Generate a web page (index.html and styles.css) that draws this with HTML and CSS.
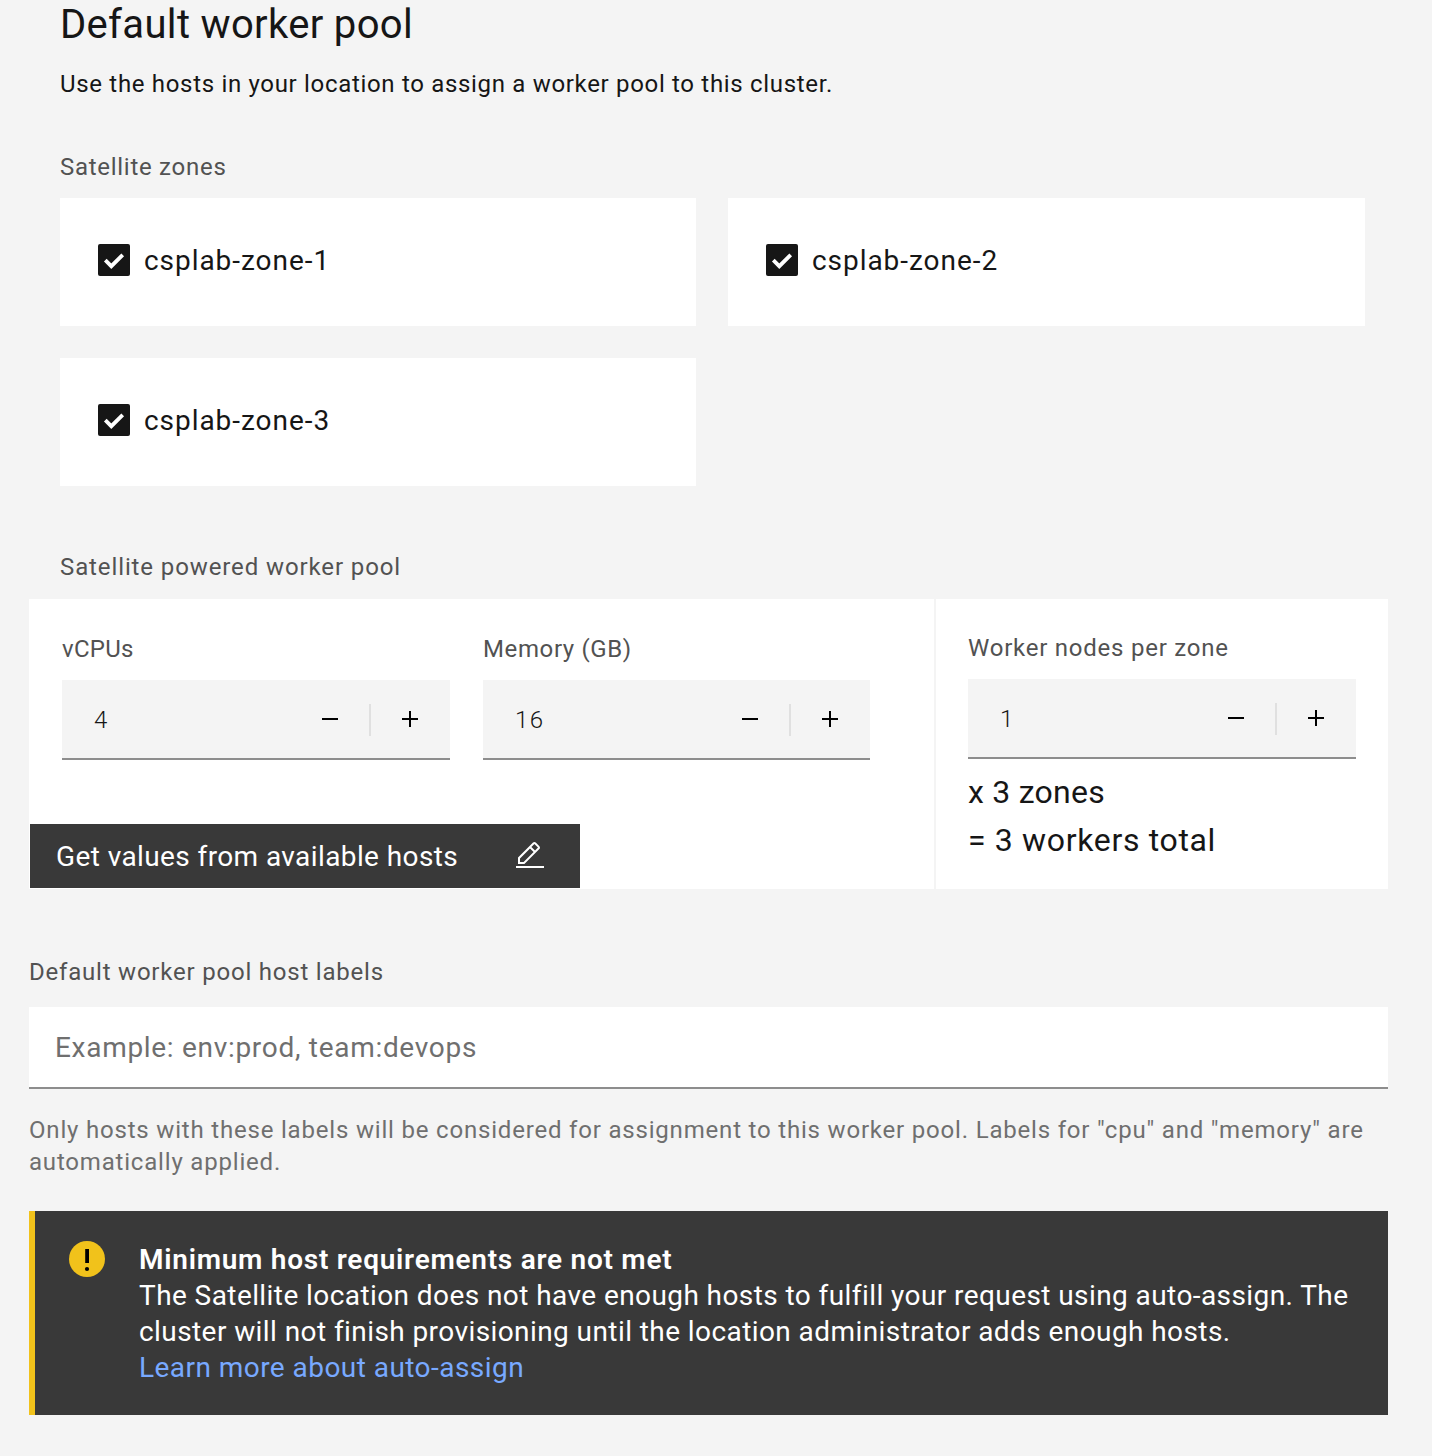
FILE: index.html
```html
<!DOCTYPE html>
<html lang="en">
<head>
<meta charset="utf-8">
<title>Default worker pool</title>
<link rel="stylesheet" href="styles.css">
</head>
<body>
<main class="page">
  <header class="intro">
    <h1 class="title">Default worker pool</h1>
    <p class="lead">Use the hosts in your location to assign a worker pool to this cluster.</p>
  </header>

  <section class="zones">
    <h2 class="label label-zones">Satellite zones</h2>
    <div class="zone-grid">
      <div class="zone">
        <svg class="check" viewBox="0 0 32 32"><rect width="32" height="32" rx="2" fill="#161616"/><path d="M7.3 16.2l6 6L24.7 10.8" fill="none" stroke="#fff" stroke-width="3.8"/></svg>
        <span class="zone-name">csplab-zone-1</span>
      </div>
      <div class="zone">
        <svg class="check" viewBox="0 0 32 32"><rect width="32" height="32" rx="2" fill="#161616"/><path d="M7.3 16.2l6 6L24.7 10.8" fill="none" stroke="#fff" stroke-width="3.8"/></svg>
        <span class="zone-name">csplab-zone-2</span>
      </div>
      <div class="zone">
        <svg class="check" viewBox="0 0 32 32"><rect width="32" height="32" rx="2" fill="#161616"/><path d="M7.3 16.2l6 6L24.7 10.8" fill="none" stroke="#fff" stroke-width="3.8"/></svg>
        <span class="zone-name">csplab-zone-3</span>
      </div>
    </div>
  </section>

  <section class="pool">
    <h2 class="label label-pool">Satellite powered worker pool</h2>
    <div class="panel">
      <div class="panel-main">
        <div class="fields">
          <div class="field field-cpu">
            <div class="label label-cpu">vCPUs</div>
            <div class="stepper">
              <span class="value">4</span>
              <svg class="icon16" viewBox="0 0 16 16"><path d="M0 7h16v2H0z"/></svg>
              <i class="rule"></i>
              <svg class="icon16" viewBox="0 0 16 16"><path d="M9 7V0H7v7H0v2h7v7h2V9h7V7z"/></svg>
            </div>
          </div>
          <div class="field field-memory">
            <div class="label label-memory">Memory (GB)</div>
            <div class="stepper">
              <span class="value value-memory">16</span>
              <svg class="icon16" viewBox="0 0 16 16"><path d="M0 7h16v2H0z"/></svg>
              <i class="rule"></i>
              <svg class="icon16" viewBox="0 0 16 16"><path d="M9 7V0H7v7H0v2h7v7h2V9h7V7z"/></svg>
            </div>
          </div>
        </div>
        <button class="fetch" type="button">
          <span class="fetch-text">Get values from available hosts</span>
          <svg class="icon32" viewBox="0 0 32 32"><path d="M2 26H30V28H2zM25.4 9c.8-.8.8-2 0-2.8l-3.6-3.6c-.8-.8-2-.8-2.8 0l-15 15V24h6.4L25.4 9zM20.4 4L24 7.6l-3 3L17.4 7 20.4 4zM6 22v-3.6l10-10 3.6 3.6-10 10H6z"/></svg>
        </button>
      </div>
      <div class="panel-side">
        <div class="label label-nodes">Worker nodes per zone</div>
        <div class="stepper">
          <span class="value">1</span>
          <svg class="icon16" viewBox="0 0 16 16"><path d="M0 7h16v2H0z"/></svg>
          <i class="rule"></i>
          <svg class="icon16" viewBox="0 0 16 16"><path d="M9 7V0H7v7H0v2h7v7h2V9h7V7z"/></svg>
        </div>
        <div class="totals">
          <div class="total-zones">x 3 zones</div>
          <div class="total-workers">= 3 workers total</div>
        </div>
      </div>
    </div>
  </section>

  <section class="host-labels">
    <label class="label label-hosts" for="hosts">Default worker pool host labels</label>
    <input class="text-input" id="hosts" type="text" placeholder="Example: env:prod, team:devops">
    <p class="help">Only hosts with these labels will be considered for assignment to this worker pool. Labels for "cpu" and "memory" are<br>automatically applied.</p>
  </section>

  <section class="notice">
    <svg class="warning" viewBox="0 0 36 36"><circle cx="18" cy="18" r="18" fill="#f1c21b"/><path d="M16.2 8h3.8v14h-3.8z"/><circle cx="18" cy="28" r="2.1"/></svg>
    <div class="notice-text">
      <strong class="notice-title">Minimum host requirements are not met</strong>
      <p class="notice-body">The Satellite location does not have enough hosts to fulfill your request using auto-assign. The<br>cluster will not finish provisioning until the location administrator adds enough hosts.</p>
      <a class="notice-link" href="#">Learn more about auto-assign</a>
    </div>
  </section>
</main>
</body>
</html>
```
FILE: styles.css
```css
* {
  box-sizing: border-box;
}

body {
  margin: 0;
  background: #f4f4f4;
  color: #161616;
  font-family: Roboto, "Liberation Sans", sans-serif;
}

h1,
h2,
p {
  margin: 0;
  font-weight: 400;
}

svg {
  display: block;
  flex: none;
}

.page {
  width: 1432px;
  height: 1456px;
  padding: 1px 44px 0 29px;
  overflow: hidden;
}

.intro {
  padding-left: 31px;
}

.title {
  font-size: 40px;
  line-height: 48px;
  letter-spacing: 0.33px;
}

.lead {
  margin-top: 19px;
  font-size: 24px;
  line-height: 32px;
  letter-spacing: 0.68px;
}

.label {
  display: block;
  color: #525252;
  font-size: 24px;
  line-height: 32px;
  white-space: nowrap;
}

.zones {
  margin-top: 51px;
  padding: 0 23px 0 31px;
}

.label-zones {
  letter-spacing: 0.72px;
}

.zone-grid {
  display: grid;
  grid-template-columns: 636px 637px;
  grid-auto-rows: 128px;
  gap: 32px;
  margin-top: 15px;
}

.zone {
  display: flex;
  align-items: flex-start;
  gap: 14px;
  padding: 46px 38px;
  background: #fff;
}

.check {
  width: 32px;
  height: 32px;
}

.zone-name {
  font-size: 28px;
  line-height: 34px;
  letter-spacing: 0.95px;
}

.pool {
  margin-top: 65px;
}

.label-pool {
  padding-left: 31px;
  letter-spacing: 0.89px;
}

.panel {
  display: grid;
  grid-template-columns: 905px 452px;
  gap: 2px;
  height: 290px;
  margin-top: 16px;
}

.panel-main,
.panel-side {
  background: #fff;
}

.panel-main {
  display: flex;
  flex-direction: column;
  justify-content: space-between;
  padding: 34px 0 1px 1px;
}

.fields {
  display: flex;
  gap: 33px;
  padding-left: 32px;
}

.field-cpu {
  width: 388px;
}

.field-memory {
  width: 387px;
}

.label-cpu {
  letter-spacing: 0.263px;
}

.label-memory {
  letter-spacing: 0.62px;
}

.label-nodes {
  letter-spacing: 0.76px;
}

.stepper {
  display: flex;
  align-items: center;
  height: 80px;
  margin-top: 15px;
  padding: 0 32px;
  background: #f4f4f4;
  border-bottom: 2px solid #8d8d8d;
}

.value {
  flex: 1;
  padding-top: 1px;
  font-size: 24px;
  font-weight: 300;
  line-height: 32px;
}

.value-memory {
  letter-spacing: 1.5px;
}

.icon16 {
  width: 16px;
  height: 16px;
}

.rule {
  width: 2px;
  height: 32px;
  margin: 2px 31px 0;
  background: #e0e0e0;
}

.fetch {
  display: flex;
  align-items: center;
  justify-content: space-between;
  width: 550px;
  height: 64px;
  padding: 0 34px 0 26px;
  border: 0;
  background: #393939;
  color: #fff;
  font-family: inherit;
  font-size: 28px;
  line-height: 36px;
  letter-spacing: 0.4px;
}

.fetch-text {
  padding-top: 2px;
}

.icon32 {
  width: 32px;
  height: 32px;
  fill: #fff;
}

.panel-side {
  padding: 33px 32px 0;
}

.totals {
  margin-top: 9px;
  font-size: 32px;
  line-height: 48px;
}

.total-zones {
  letter-spacing: 0.25px;
}

.total-workers {
  letter-spacing: 0.66px;
}

.host-labels {
  margin-top: 67px;
}

.label-hosts {
  letter-spacing: 0.79px;
}

.text-input {
  display: block;
  width: 1359px;
  height: 82px;
  margin-top: 19px;
  padding: 0 26px;
  border: 0;
  border-bottom: 2px solid #8d8d8d;
  border-radius: 0;
  background: #fff;
  font-family: inherit;
  font-size: 28px;
  letter-spacing: 0.7px;
}

.text-input::placeholder {
  color: #6f6f6f;
  opacity: 1;
}

.help {
  margin-top: 25px;
  color: #6f6f6f;
  font-size: 24px;
  line-height: 32px;
  letter-spacing: 0.81px;
  white-space: nowrap;
}

.notice {
  display: flex;
  gap: 34px;
  height: 204px;
  margin-top: 33px;
  padding: 30px 34px;
  border-left: 6px solid #f1c21b;
  background: #393939;
  color: #fff;
  font-size: 28px;
  line-height: 36px;
  white-space: nowrap;
}

.notice-text {
  padding-top: 1px;
}

.warning {
  width: 36px;
  height: 36px;
}

.notice-title {
  display: block;
  font-weight: 600;
  letter-spacing: 0.74px;
}

.notice-body {
  letter-spacing: 0.42px;
}

.notice-link {
  display: block;
  color: #78a9ff;
  letter-spacing: 0.45px;
  text-decoration: none;
}
```
